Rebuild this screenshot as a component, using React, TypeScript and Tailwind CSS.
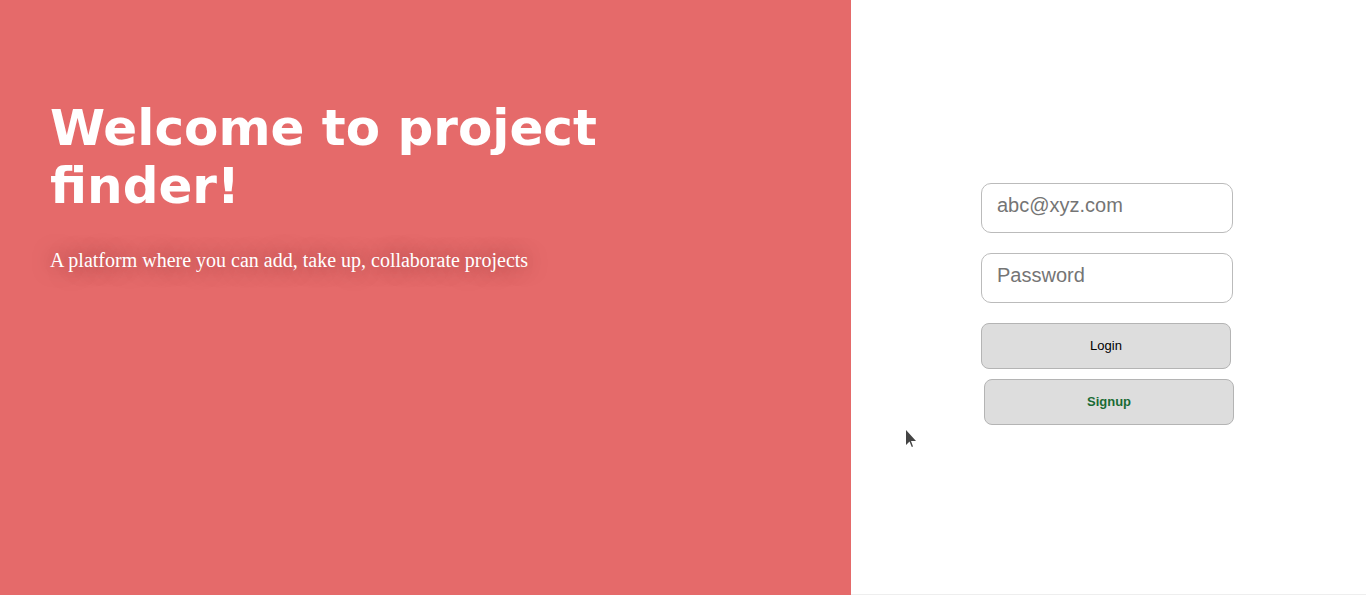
import { useState } from "react";

function Cursor() {
  return (
    <svg
      className="absolute left-[904px] top-[428px]"
      width="16"
      height="24"
      viewBox="0 0 16 24"
    >
      <path d="M2.5 2.5 L2.5 18 L6 14.5 L8.5 20 L10.5 19 L8.2 13.6 L13 13.6 Z" fill="#ffffff" opacity="0.8" />
      <path d="M2 2 L2 17 L5.5 13.5 L7.8 19 L9 18.5 L7 13 L12 13 Z" fill="#444444" />
    </svg>
  );
}

export default function App() {
  const [email, setEmail] = useState("");
  const [password, setPassword] = useState("");

  return (
    <div className="relative flex h-[595px] w-full overflow-hidden bg-white">
      {/* Left hero */}
      <div className="w-[851px] shrink-0 bg-[#e56a6a] pl-[50px] pt-[100px]">
        <h1 className="w-[620px] font-['DejaVu_Sans',sans-serif] text-[50px] font-bold leading-[1.15] text-white">
          Welcome to project finder!
        </h1>
        <p className="mt-[30px] font-['Liberation_Serif',serif] text-[20px] text-white [text-shadow:0_0_20px_rgba(80,25,25,0.6)]">
          A platform where you can add, take up, collaborate projects
        </p>
      </div>

      {/* Right login form */}
      <div className="flex flex-1 flex-col border-b border-[#eeeeee] pl-[130px] pt-[183px]">
        <input
          value={email}
          onChange={(e) => setEmail(e.target.value)}
          placeholder="abc@xyz.com"
          className="h-[50px] w-[252px] rounded-[10px] border border-[#bbbbbb] bg-white px-[15px] pb-[6px] font-['Liberation_Sans',sans-serif] text-[20px] text-black outline-none placeholder:text-[#757575]"
        />
        <input
          type="password"
          value={password}
          onChange={(e) => setPassword(e.target.value)}
          placeholder="Password"
          className="mt-[20px] h-[50px] w-[252px] rounded-[10px] border border-[#bbbbbb] bg-white px-[15px] pb-[6px] font-['Liberation_Sans',sans-serif] text-[20px] text-black outline-none placeholder:text-[#757575]"
        />
        <button className="mt-[20px] h-[46px] w-[250px] rounded-[8px] border border-[#b4b4b4] bg-[#dddddd] font-['Liberation_Sans',sans-serif] text-[13px] text-black">
          Login
        </button>
        <button className="ml-[3px] mt-[10px] h-[46px] w-[250px] rounded-[8px] border border-[#b4b4b4] bg-[#dddddd] font-['Liberation_Sans',sans-serif] text-[13px] font-bold text-[#1a6b35]">
          Signup
        </button>
      </div>

      <Cursor />
    </div>
  );
}
